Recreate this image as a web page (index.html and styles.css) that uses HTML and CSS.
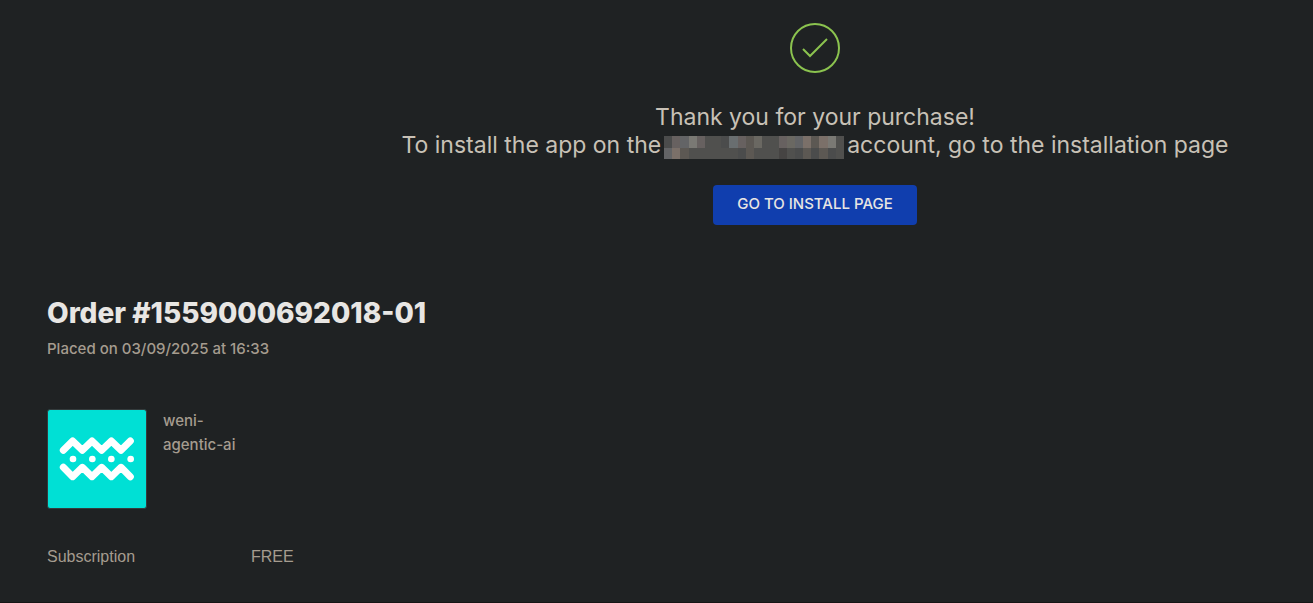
FILE: index.html
```html
<!DOCTYPE html>
<html lang="en">
<head>
<meta charset="utf-8">
<title>Order confirmation</title>
<link rel="stylesheet" href="styles.css">
</head>
<body>
<main class="page">
  <section class="confirmation">
    <svg class="check" viewBox="0 0 50 50" aria-hidden="true"><circle cx="25" cy="25" r="24"/><path d="M13 26l7 7L37 16"/></svg>
    <p class="message">Thank you for your purchase!</p>
    <p class="message account-line"><span>To install the app on the</span>
      <svg class="redacted" viewBox="0 0 22 2" preserveAspectRatio="none" shape-rendering="crispEdges" aria-hidden="true">
        <path fill="#50504e" d="M0 0h22v2H0z"/>
        <path fill="#4b4c4c" d="M0 0h1v1H0zM7 0h1v1H7zM9 1h1v1H9zM16 1h1v1h-1zM18 1h1v1h-1zM20 1h1v1h-1z"/>
        <path fill="#676160" d="M1 0h1v1H1zM4 0h1v1H4zM9 0h1v1H9zM14 0h1v1h-1z"/>
        <path fill="#636466" d="M2 0h1v1H2zM0 1h1v1H0zM16 0h1v1h-1z"/>
        <path fill="#7a7974" d="M3 0h1v1H3zM20 0h1v1h-1z"/>
        <path fill="#696e70" d="M8 0h1v1H8z"/>
        <path fill="#6a6862" d="M11 0h1v1h-1zM15 0h1v1h-1z"/>
        <path fill="#7b7069" d="M17 0h1v1h-1zM19 0h1v1h-1zM1 1h1v1H1z"/>
        <path fill="#5c5853" d="M10 0h1v1h-1zM18 0h1v1h-1zM2 1h1v1H2zM10 1h1v1h-1zM17 1h1v1h-1zM19 1h1v1h-1z"/>
        <path fill="#464443" d="M14 1h1v1h-1z"/>
      </svg>
      <span>account, go to the installation page</span></p>
    <button class="install" type="button">GO TO INSTALL PAGE</button>
  </section>
  <section class="order">
    <h1 class="order-title">Order #1559000692018-01</h1>
    <p class="placed">Placed on 03/09/2025 at 16:33</p>
    <div class="product">
      <svg class="logo" viewBox="24 30 294 294" role="img" aria-label="weni">
        <g class="waves"><path d="M70 151L98 123L127 151L156 123L185 151L214 123L243 151L271 123"/><path d="M70 202L98 230L127 202L156 230L185 202L214 230L243 202L271 230"/></g>
        <g class="dots"><circle cx="99" cy="177" r="10"/><circle cx="157" cy="177" r="10"/><circle cx="214" cy="177" r="10"/><circle cx="272" cy="177" r="10"/></g>
      </svg>
      <p class="product-name">weni-<br>agentic-ai</p>
    </div>
    <dl class="plan"><dt>Subscription</dt><dd>FREE</dd></dl>
  </section>
</main>
</body>
</html>
```
FILE: styles.css
```css
* { box-sizing: border-box; }
body {
  margin: 0;
  background: #1f2223;
  color: #a59c8f;
  font-family: Inter, "Open Sans", sans-serif;
  font-size: 15px;
}
p, h1, dl, dd { margin: 0; }
.page { overflow: hidden; border-bottom: 1px solid #151515; }
.confirmation {
  display: flex;
  flex-direction: column;
  align-items: center;
  margin-left: 317px;
  padding-top: 23px;
}
.check {
  width: 50px;
  height: 50px;
  margin-bottom: 30px;
  fill: none;
  stroke: #8bc34f;
  stroke-width: 2;
}
.message {
  color: #c8c1b6;
  font-size: 23px;
  line-height: 28px;
  white-space: nowrap;
}
.account-line { display: flex; align-items: center; gap: 3px; }
.redacted { width: 180px; height: 23px; margin-top: 4px; }
.install {
  margin-top: 26px;
  width: 204px;
  height: 40px;
  padding: 0 0 4px;
  border: 0;
  border-radius: 4px;
  background: #103eae;
  color: #e8e6e3;
  font: 500 15px Inter, sans-serif;
}
.order { padding: 68px 47px 33px; }
.order-title {
  color: #e8e6e3;
  font-size: 28px;
  font-weight: 800;
  line-height: 40px;
}
.placed { margin-top: 4px; font-weight: 500; line-height: 24px; }
.product { display: flex; gap: 16px; margin-top: 48px; }
.logo {
  width: 100px;
  height: 100px;
  border: 1px solid #343b3c;
  border-radius: 3px;
  background: #00e0d5;
}
.waves { fill: none; stroke: #fff; stroke-width: 21; stroke-linecap: round; stroke-linejoin: round; }
.dots { fill: #fff; }
.product-name { font-weight: 500; line-height: 24px; }
.plan {
  display: grid;
  grid-template-columns: 204px 1fr;
  margin-top: 36px;
  font: 16px/24px "Liberation Sans", sans-serif;
}
```
